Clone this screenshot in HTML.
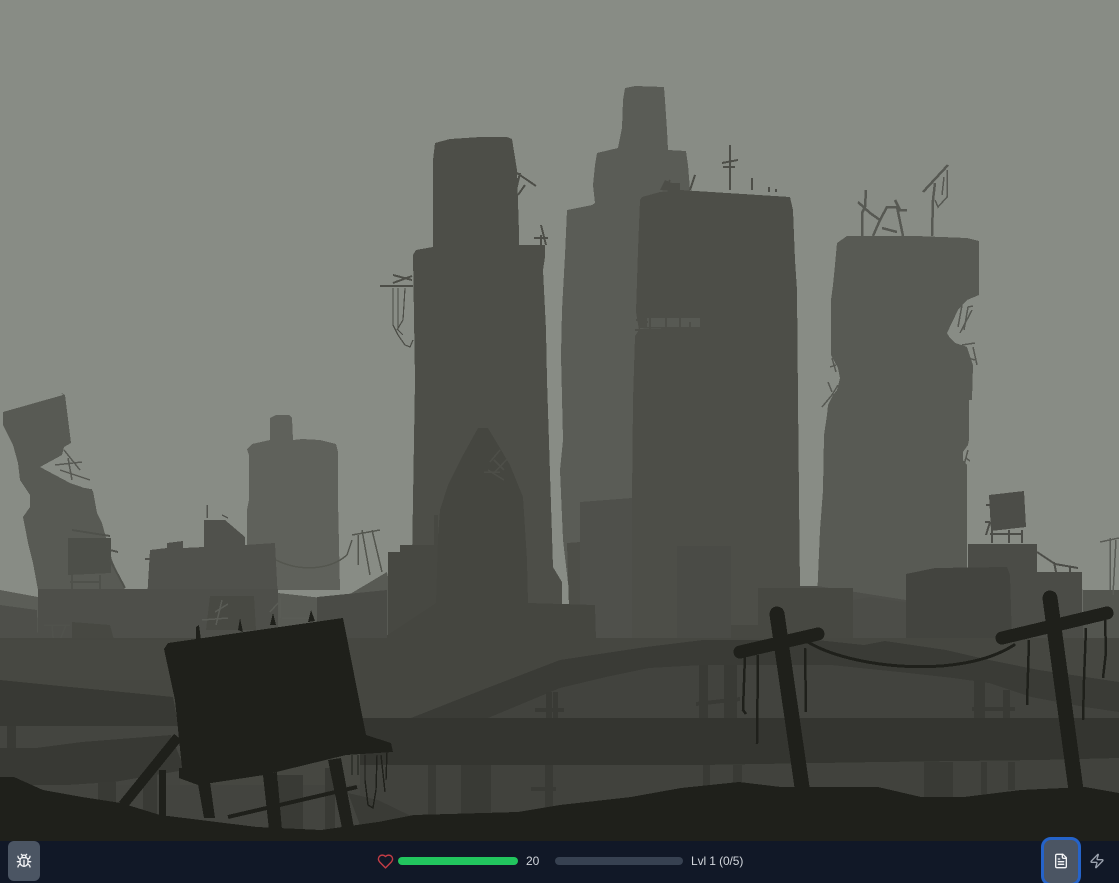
<!DOCTYPE html>
<html><head><meta charset="utf-8"><title>Game</title>
<style>
html,body{margin:0;padding:0;width:1119px;height:883px;overflow:hidden;background:#111827;font-family:"Liberation Sans",sans-serif}
#w{position:absolute;left:0;top:0;width:1119px;height:883px;overflow:hidden;background:#888c85}
#s{position:absolute;left:0;top:0}
#bar{position:absolute;left:0;top:841px;width:1119px;height:42px;background:#111827}
.b{position:absolute;box-sizing:border-box}
.t{position:absolute;font-size:12px;line-height:14px;color:#d1d5db;white-space:nowrap}
svg.i{position:absolute;fill:none;stroke-width:2;stroke-linecap:round;stroke-linejoin:round}
</style></head><body>
<div id="w">
<svg id="s" width="1119" height="841" viewBox="0 0 1119 841" shape-rendering="crispEdges">
<rect width="1119" height="841" fill="#888c85"/>
<g fill="#5f615b">
<path d="M270 440L270 418L276 415L289 415L292 418L293 440L302 439L320 440L336 444L338 452L338 500L340 590L247 590L247 510L249 500L249 455L247 449L252 444Z"/>
</g>
<g fill="#585a54">
<path d="M3 412L63 395L60 392L65 395L71 443L64 447L62 455L40 467L70 483L93 491L97 513L102 523L112 560L125 590L38 590L33 563L28 543L25 527L23 517L30 507L30 495L20 480L18 463L13 445L3 425Z"/>
<path d="M837 243L847 236L916 236L967 238L979 241L979 295L967 300L958 310L947 333L950 338L955 343L967 347L973 365L972 400L969 400L969 440L968 445L963 452L963 460L967 465L967 600L817 600L820 530L823 490L824 435L827 415L828 405L833 395L837 390L840 378L838 368L831 355L831 300L833 285L835 265Z"/>
</g>
<path d="M625 88L635 86L664 87L665 100L667 130L668 150L686 151L688 165L690 190L700 600L570 600L563 540L560 470L563 440L561 355L562 310L565 255L567 210L592 205L595 203L593 185L595 165L597 153L618 148L622 128L623 100Z" fill="#5a5c56"/>
<g fill="none" stroke="#575953" stroke-width="2.5">
<path d="M866 190L865 207L862 213L862 236M858 202L870 213L880 220L873 236M880 220L887 207L897 207L903 236M895 200L900 210L907 210M882 228L897 232"/>
<path d="M932 236L933 200L935 183M923 192L948 165"/>
</g>
<g fill="none" stroke="#575953" stroke-width="1.5">
<path d="M947 170L947 197L938 207L935 200M944 177L942 195"/>
<path d="M958 327L962 305M964 330L968 307L973 306M960 333L972 310M962 345L975 343M973 347L977 365M968 358L975 360"/>
<path d="M832 358L836 372M822 407L832 395L838 385M828 382L832 392M830 367L836 365"/>
<path d="M968 450L964 465M966 458L970 461"/>
<path d="M64 450L80 470M55 465L82 462M60 470L90 480M68 458L72 480M75 487L92 490"/>
</g>
<path d="M276 560C300 572 330 570 347 555L352 540M352 535L380 530M362 530L370 575M372 530L382 572M358 535L358 565Z" fill="none" stroke="#54564f" stroke-width="1.5"/>
<path d="M207 505V518M222 515L228 518" fill="none" stroke="#52534e" stroke-width="1.5"/>
<path d="M150 550L167 548L167 543L183 541L183 548L204 547L204 520L225 520L245 537L245 545L275 543L278 600L147 600Z" fill="#50514c"/>
<path d="M145 559L152 559" stroke="#50514c" stroke-width="2"/>
<g fill="#4d4f49">
<path d="M68 538L111 538L111 573L68 575Z"/>
</g>
<path d="M72 575V590M100 575V590M72 530L110 536M110 550L118 552M110 560L125 588M70 582L100 582" fill="none" stroke="#4f514b" stroke-width="2"/>
<path d="M0 590L38 597L38 640L0 640Z" fill="#5b5d57"/>
<path d="M278 593L340 600L387 572L400 640L278 640Z" fill="#585a54"/>
<path d="M435 143L450 139L480 137L507 137L512 139L517 170L519 233L519 245L545 245L545 257L543 270L546 330L547 380L553 567L562 582L562 640L412 640L412 560L415 380L413 255L416 250L433 247L433 160Z" fill="#4d4e48"/>
<path d="M642 197L660 192L680 190L790 197L793 210L795 260L797 290L798 400L800 590L800 640L570 640L567 543L580 542L580 502L632 498L633 400L635 336L639 330L636 312L638 250L640 200Z" fill="#4d4e48"/>
<path d="M647 318H700V327H647ZM640 328H705V329H640Z" fill="#5a5c56" opacity=".8"/>
<path d="M635 330L705 328M650 318L650 330M666 315V330M680 318V330M690 322V330M636 320L648 322" fill="none" stroke="#4d4e48" stroke-width="2"/>
<path d="M580 502L632 498L632 640L580 640Z" fill="#4f504b"/>
<g fill="none" stroke="#4d4e48" stroke-width="2">
<path d="M380 286H413M393 283L412 276M393 275L412 280"/>
<path d="M514 171L536 186M520 173L516 190M525 185L518 195"/>
<path d="M541 225L546 245M534 238L548 238M541 235V245"/>
<path d="M730 145V190M722 163L738 160M723 167L735 167M670 180L665 190M695 175L690 190M752 178V190M769 187V192M776 189V192"/>
</g>
<g fill="none" stroke="#4d4e48" stroke-width="1.2">
<path d="M393 288V325L398 335L405 345L410 347L413 340M398 288V330L403 335M405 288L403 320L397 330"/>
</g>
<path d="M660 190L665 180L672 183L680 183L680 192Z" fill="#4d4e48"/>
<path d="M388 552H434V515L438 515V545L444 540L528 603V640H388Z" fill="#474842"/>
<path d="M400 545H436V552H400Z" fill="#474842"/>
<path d="M478 428L488 428L497 443L510 465L523 497L527 560L528 603L595 605L596 640L380 640L436 603L438 537L440 510L448 485L462 457Z" fill="#454640"/>
<path d="M490 462L500 450M495 472L510 456M488 470L504 480M494 460L504 470M484 472H500" fill="none" stroke="#4d4e48" stroke-width="1.5"/>
<path d="M677 546H731V640H677Z" fill="#4a4b46"/>
<path d="M800 586L817 586L906 600V640H800Z" fill="#4e4f4a"/>
<path d="M758 588H853V640H758ZM731 625H758V640H731Z" fill="#474842"/>
<path d="M853 600L870 597L888 600L906 602V640H853Z" fill="#4c4d48"/>
<path d="M968 544H1037V572H1082L1083 640H968Z" fill="#4b4c47"/>
<path d="M1083 590H1119V645H1083Z" fill="#53554f"/>
<path d="M906 574L935 568L1007 567L1010 575L1012 640H906Z" fill="#43443f"/>
<path d="M989 495L1024 491L1026 527L991 531Z" fill="#4c4d48"/>
<path d="M992 530V543M1009 530V543M1022 530V543M990 534H1022M986 535L990 522M985 522H990M986 505H990M1037 552L1055 564L1078 568M1054 562L1056 572M1070 566V572" fill="none" stroke="#4c4d48" stroke-width="2"/>
<g fill="none" stroke="#5a5c56" stroke-width="1.5">
<path d="M1100 542L1119 538M1110 538V590M1116 540L1113 595"/>
</g>
<path d="M0 605L37 610L38 640L0 640Z" fill="#4e4f4a"/>
<path d="M38 589H278V640H38Z" fill="#4e4f4a"/>
<path d="M72 622L110 625L114 640H72Z" fill="#474842"/>
<path d="M210 596H254L256 630H206Z" fill="#484943"/>
<path d="M44 625H70M52 625L54 648M66 625L60 640" fill="none" stroke="#50524c" stroke-width="1.5"/>
<path d="M215 612L228 604M202 620L228 618M216 625L222 600" fill="none" stroke="#5a5c56" stroke-width="1.5"/>
<path d="M278 603L270 612M280 598V618M282 618H310" fill="none" stroke="#5a5c56" stroke-width="1.5"/>
<path d="M317 597L387 590V640H317Z" fill="#4a4b46"/>
<path d="M0 638H1119V841H0Z" fill="#464741"/>
<path d="M360 638H600V700H360Z" fill="#454640"/>
<path d="M0 640H175V680H0Z" fill="#474842"/>
<path d="M0 680L60 686L153 695L173 697L180 735L125 733L36 726L0 726Z" fill="#383934"/>
<path d="M0 726H180V790H0Z" fill="#444540"/>
<path d="M7 726H16V748H7Z" fill="#393a35"/>
<path d="M0 748L36 748L82 742L171 735L185 770L114 782L36 787L0 785Z" fill="#383934"/>
<path d="M0 785H420V841H0Z" fill="#43443f"/>
<path d="M360 718H1119V840H360Z" fill="#41423d"/>
<path d="M411 718L482 690L560 660L606 653L646 647L703 640L817 640L864 645L885 641L946 650L989 660L1039 670L1119 682V712L1085 707L1031 697L989 683L953 678L899 672L831 665L703 665L649 668L606 677L560 688L488 718Z" fill="#3a3b36"/>
<path d="M488 718L560 688L606 677L649 668L703 665L831 665L899 672L953 678L989 683L1031 697L1085 707L1119 712V720H488Z" fill="#42433e"/>
<g fill="#393a35">
<path d="M699 665H708V720H699ZM724 665H737V720H724ZM974 680H985V720H974ZM1003 690H1010V720H1003ZM546 692H552V720H546ZM553 692H558V720H553ZM696 702L740 697V701L696 706ZM972 707H1015V711H972ZM535 708H564V712H535Z"/>
</g>
<path d="M360 718L1119 718V758L1040 760L880 762L700 765L360 765Z" fill="#343530"/>
<g fill="#393a35">
<path d="M703 765H710V790H703ZM733 765H742V790H733ZM924 762H953V800H924ZM981 762H987V800H981ZM1008 762H1015V790H1008ZM428 765H436V820H428ZM461 765H491V820H461ZM545 765H553V810H545ZM531 787H556V791H531ZM278 775H303V830H278ZM325 768H335V830H325ZM98 782H116V810H98ZM143 775H157V815H143Z"/>
</g>
<path d="M348 793L378 800L411 816L360 825Z" fill="#3a3b36"/>
<path d="M0 777L14 777L43 790L82 797L121 803L160 815L257 827L321 830L378 822L414 815L518 812L560 805L631 797L681 788L739 782L781 787L878 787L921 797L964 797L1021 790L1085 787L1119 793V841H0Z" fill="#1f201b"/>
<g fill="#1f201b">
<path d="M164 649L168 643L343 618L366 735L391 743L393 752L346 755L264 775L198 785L179 778L179 768L182 768L175 700Z"/>
<path d="M196 627L199 625L201 640H196ZM238 630L240 618L243 632ZM270 625L273 613L276 625ZM308 622L311 610L315 621Z"/>
<path d="M198 784L210 782L215 818L204 818ZM263 775L277 772L282 830L269 830ZM328 760L341 758L354 828L342 828Z"/>
<path d="M159 770H166V816H159Z"/>
</g>
<path d="M178 737L123 805" stroke="#1f201b" stroke-width="10" fill="none"/>
<path d="M357 787L228 817" stroke="#1f201b" stroke-width="4" fill="none"/>
<path d="M352 755V775M358 755V775M365 755V780L368 805L373 808L376 790L377 755M381 755L385 792M387 752L386 780" fill="none" stroke="#1f201b" stroke-width="1.4"/>
<g fill="none" stroke="#1f201b" stroke-linecap="round">
<path d="M777 614L802 787" stroke-width="15"/>
<path d="M1050 598L1076 790" stroke-width="15"/>
<path d="M740 652L818 634" stroke-width="13"/>
<path d="M1002 638L1107 613" stroke-width="13"/>
<path d="M808 642C850 668 960 680 1014 645" stroke-width="3"/>
</g>
<g fill="none" stroke="#1f201b" stroke-width="2.5">
<path d="M745 655L743 710L746 714M758 655L757 744M805 648L806 712"/>
<path d="M1029 640L1027 705M1086 628L1084 680L1083 720M1105 620L1106 652L1103 678"/>
</g>
</svg>
<div id="bar"></div>
<div class="b" style="left:8px;top:841px;width:32px;height:40px;background:#4b5563;border-radius:6px"></div>
<svg class="i" style="left:16px;top:853px" width="16" height="16" viewBox="0 0 24 24" stroke="#f3f4f6"><path d="m8 2 1.88 1.88"/><path d="M14.12 3.88 16 2"/><path d="M9 7.13v-1a3.003 3.003 0 1 1 6 0v1"/><path d="M12 20c-3.3 0-6-2.7-6-6v-3a4 4 0 0 1 4-4h4a4 4 0 0 1 4 4v3c0 3.3-2.7 6-6 6"/><path d="M12 20v-9"/><path d="M6.53 9C4.6 8.8 3 7.1 3 5"/><path d="M6 13H2"/><path d="M3 21c0-2.1 1.7-3.9 3.8-4"/><path d="M20.97 5c0 2.1-1.6 3.8-3.5 4"/><path d="M22 13h-4"/><path d="M17.2 17c2.1.1 3.8 1.9 3.8 4"/></svg>
<svg class="i" style="left:377px;top:853px" width="17" height="17" viewBox="0 0 24 24" stroke="#c43c46"><path d="M19 14c1.49-1.46 3-3.21 3-5.5A5.5 5.5 0 0 0 16.5 3c-1.76 0-3 .5-4.5 2-1.5-1.5-2.74-2-4.5-2A5.5 5.5 0 0 0 2 8.5c0 2.3 1.5 4.05 3 5.5l7 7Z"/></svg>
<div class="b" style="left:398px;top:857px;width:120px;height:8px;background:#22c55e;border-radius:4px"></div>
<div class="t" style="left:526px;top:854px">20</div>
<div class="b" style="left:555px;top:857px;width:128px;height:8px;background:#374151;border-radius:4px"></div>
<div class="t" style="left:691px;top:854px;letter-spacing:-.1px">Lvl 1 (0/5)</div>
<div class="b" style="left:1041px;top:837px;width:40px;height:49px;background:#4b5563;border:3px solid #2563c9;border-radius:10px"></div>
<svg class="i" style="left:1053px;top:853px" width="16" height="16" viewBox="0 0 24 24" stroke="#f3f4f6"><path d="M15 2H6a2 2 0 0 0-2 2v16a2 2 0 0 0 2 2h12a2 2 0 0 0 2-2V7Z"/><path d="M14 2v4a2 2 0 0 0 2 2h4"/><path d="M10 9H8"/><path d="M16 13H8"/><path d="M16 17H8"/></svg>
<svg class="i" style="left:1089px;top:853px" width="16" height="16" viewBox="0 0 24 24" stroke="#9ca3af"><path d="M4 14a1 1 0 0 1-.78-1.63l9.9-10.2a.5.5 0 0 1 .86.46l-1.92 6.02A1 1 0 0 0 13 10h7a1 1 0 0 1 .78 1.63l-9.9 10.2a.5.5 0 0 1-.86-.46l1.92-6.02A1 1 0 0 0 11 14z"/></svg>
</div>
</body></html>
